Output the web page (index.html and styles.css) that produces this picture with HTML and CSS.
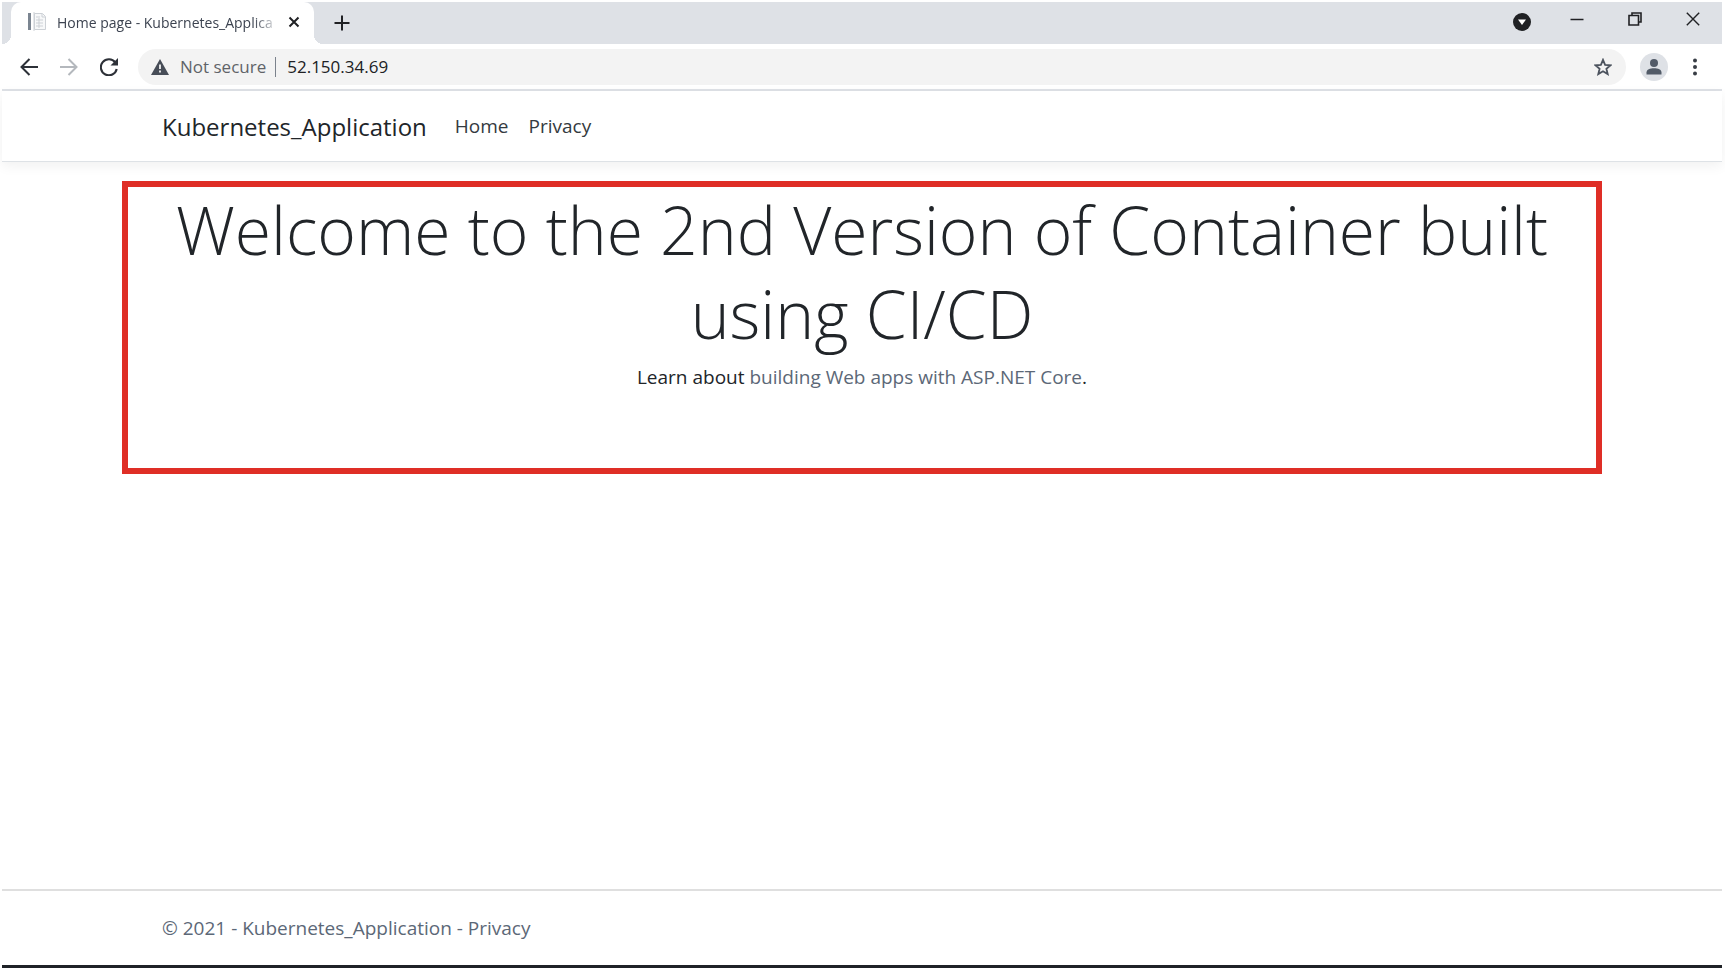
FILE: index.html
```html
<!DOCTYPE html>
<html lang="en">
<head>
<meta charset="utf-8">
<title>Home page - Kubernetes_Application</title>
<link rel="stylesheet" href="styles.css">
</head>
<body>
<div class="window">
  <div class="tab-strip">
    <div class="tab">
      <svg class="favicon" width="20" height="20" viewBox="0 0 20 20" aria-hidden="true">
        <path d="M1 1h3v17H1z" fill="#7b8591"/>
        <path d="M7.500 1.500h8l3 3v13h-11z" fill="#f7f8f9" stroke="#cdd1d6"/>
        <path d="M7 0v19M15 2v3h3M9 5h4M9 8h7M9 11h7M9 14h7M12 6v10" fill="none" stroke="#cdd1d6"/>
      </svg>
      <span class="tab-title">Home page - Kubernetes_Applica</span>
      <button class="icon-button tab-close" aria-label="Close tab">
        <svg width="12" height="12" viewBox="0 0 12 12"><path d="M1.500 1.500l9 9m0-9l-9 9" stroke="#202124" stroke-width="2" fill="none"/></svg>
      </button>
    </div>
    <button class="icon-button new-tab" aria-label="New tab">
      <svg width="16" height="16" viewBox="0 0 16 16"><path d="M8 .5v15M.5 8h15" stroke="#202124" stroke-width="2" fill="none"/></svg>
    </button>
    <div class="window-controls">
      <button class="icon-button tab-search" aria-label="Search tabs">
        <svg width="18" height="18" viewBox="0 0 18 18"><circle cx="9" cy="9" r="9" fill="#202124"/><path d="M5 6.500h8L9 12z" fill="#fff"/></svg>
      </button>
      <div class="window-buttons">
        <button class="icon-button" aria-label="Minimize">
          <svg width="14" height="14" viewBox="0 0 14 14"><path d="M.5 7.500h13" stroke="#202124" stroke-width="1.500"/></svg>
        </button>
        <button class="icon-button" aria-label="Restore">
          <svg width="14" height="14" viewBox="0 0 14 14"><path d="M1 3.500h9.500V13H1zM4 3.500V1h9v9h-2.500" fill="none" stroke="#202124" stroke-width="1.600"/></svg>
        </button>
        <button class="icon-button" aria-label="Close window">
          <svg width="14" height="14" viewBox="0 0 14 14"><path d="M.8.8l12.400 12.400m0-12.400L.8 13.200" stroke="#202124" stroke-width="1.400" fill="none"/></svg>
        </button>
      </div>
    </div>
  </div>

  <div class="toolbar">
    <div class="nav-buttons">
      <button class="icon-button" aria-label="Back">
        <svg width="18" height="18" viewBox="0 0 18 18"><path d="M18 9H1.500M9.500 1L1.500 9l8 8" fill="none" stroke="#2d3138" stroke-width="2"/></svg>
      </button>
      <button class="icon-button" aria-label="Forward">
        <svg width="18" height="18" viewBox="0 0 18 18"><path d="M0 9h16.500M8.500 1l8 8-8 8" fill="none" stroke="#b4b8bd" stroke-width="2"/></svg>
      </button>
      <button class="icon-button" aria-label="Reload">
        <svg width="18" height="18" viewBox="0 0 18 18"><path d="M15.300 4.500A8 8 0 1 0 16.700 11" fill="none" stroke="#2d3138" stroke-width="2.100"/><path d="M18 0v7.500h-7.500z" fill="#2d3138"/></svg>
      </button>
    </div>
    <form class="omnibox">
      <button type="button" class="icon-button security">
        <svg width="18" height="16" viewBox="0 0 18 16" aria-hidden="true"><path d="M9 0l9 16H0z" fill="#474d57"/><path d="M9 5.500v4.500M9 11.500v2" stroke="#f3f3f3" stroke-width="1.800"/></svg>
        <span>Not secure</span>
      </button>
      <input class="address" type="text" value="52.150.34.69" aria-label="Address">
      <button type="button" class="icon-button" aria-label="Bookmark this page">
        <svg width="18" height="18" viewBox="0 0 18 18"><path d="M9 1.800l2.100 5 5.400.500-4.100 3.500 1.300 5.300L9 13.200l-4.700 2.900 1.300-5.300L1.500 7.300l5.400-.500z" fill="none" stroke="#4c535e" stroke-width="1.800"/></svg>
      </button>
    </form>
    <button class="icon-button avatar" aria-label="Profile">
      <svg width="16" height="16" viewBox="0 0 16 16"><circle cx="8" cy="4" r="4" fill="#525b68"/><path d="M.5 15.500v-2C.5 10.500 4 9.300 8 9.300s7.500 1.200 7.500 4.200v2z" fill="#525b68"/></svg>
    </button>
    <button class="icon-button" aria-label="Menu">
      <svg width="4" height="18" viewBox="0 0 4 18"><g fill="#383d45"><circle cx="2" cy="2.500" r="2"/><circle cx="2" cy="9" r="2"/><circle cx="2" cy="15.500" r="2"/></g></svg>
    </button>
  </div>

  <header class="site-header">
    <nav class="container navbar">
      <a class="brand" href="#">Kubernetes_Application</a>
      <a class="nav-link" href="#">Home</a>
      <a class="nav-link" href="#">Privacy</a>
    </nav>
  </header>

  <main class="content">
    <section class="highlight">
      <h1>Welcome to the 2nd Version of Container built using CI/CD</h1>
      <p>Learn about <a href="#">building Web apps with ASP.NET Core</a>.</p>
    </section>
  </main>

  <footer class="site-footer">
    <div class="container">© 2021 - Kubernetes_Application - <a href="#">Privacy</a></div>
  </footer>
</div>
</body>
</html>
```
FILE: styles.css
```css
* { box-sizing: border-box; }

body {
  margin: 0;
  background: #fff;
  color: #212529;
  font-family: "Segoe UI", "Open Sans", "Noto Sans", sans-serif;
  font-size: 19px;
}

a { color: inherit; text-decoration: none; }

.window {
  display: flex;
  flex-direction: column;
  min-height: 100vh;
  padding: 2px 3px 3px 2px;
}

.icon-button {
  display: flex;
  align-items: center;
  justify-content: center;
  padding: 0;
  border: 0;
  background: none;
  color: inherit;
  font: inherit;
}

/* Browser chrome */
.tab-strip {
  display: flex;
  height: 42px;
  padding-left: 9px;
  background: #dee1e6;
}

.tab {
  position: relative;
  display: flex;
  align-items: center;
  width: 303px;
  padding: 0 14px 2px 16px;
  border-radius: 10px 10px 0 0;
  background: #fff;
}

/* Flared feet where the tab meets the toolbar */
.tab::before,
.tab::after {
  content: "";
  position: absolute;
  bottom: 0;
  width: 9px;
  height: 9px;
}

.tab::before {
  right: 100%;
  background: radial-gradient(circle at 0 0, transparent 9px, #fff 9px);
}

.tab::after {
  left: 100%;
  background: radial-gradient(circle at 100% 0, transparent 9px, #fff 9px);
}

.favicon { flex: none; margin-right: 10px; }

.tab-title {
  flex: 1;
  white-space: nowrap;
  color: #3c4350;
  font-size: 14px;
  mask-image: linear-gradient(to right, #000 88%, transparent);
}

.tab-close { margin-left: 8px; }

.new-tab { width: 56px; }

.window-controls {
  display: flex;
  align-items: center;
  gap: 39px;
  margin-left: auto;
  padding: 0 22px 8px 0;
}

.window-buttons { display: flex; gap: 44px; }

.tab-search { padding-top: 6px; }

.toolbar {
  display: flex;
  align-items: center;
  height: 47px;
  padding: 0 25px 0 18px;
  border-bottom: 2px solid #dee1e6;
}

.nav-buttons {
  display: flex;
  gap: 22px;
  margin-right: 20px;
}

.omnibox {
  display: flex;
  flex: 1;
  align-items: center;
  height: 36px;
  margin-right: 14px;
  padding: 0 14px 0 13px;
  border-radius: 18px;
  background: #f3f3f3;
  font-size: 17px;
}

.security {
  gap: 11px;
  padding-right: 9px;
  border-right: 1px solid #7b828c;
  color: #5f6368;
  line-height: 20px;
}

.address {
  flex: 1;
  min-width: 0;
  padding: 0 11px;
  border: 0;
  outline: 0;
  background: none;
  color: #202124;
  font: inherit;
}

.avatar {
  width: 28px;
  height: 28px;
  margin-right: 25px;
  border-radius: 50%;
  background: #dee1e6;
}

/* Page */
.container {
  width: 100%;
  max-width: 1400px;
  margin: 0 auto;
}

.site-header {
  border-bottom: 1px solid #dee2e6;
  box-shadow: 0 4px 12px rgba(0, 0, 0, 0.06);
}

.navbar {
  display: flex;
  align-items: center;
  height: 70px;
}

.brand { margin-right: 28px; font-size: 24px; }

.nav-link { margin-right: 20px; color: #343a40; }

.content {
  flex: 1;
  padding-top: 19px;
}

.highlight {
  width: 86%;
  min-height: 293px;
  margin: 0 auto;
  padding: 0 32px;
  border: 6px solid #df2e26;
  text-align: center;
}

.highlight h1 {
  margin: 0 0 6px;
  font-size: 66px;
  font-weight: 300;
  line-height: 84px;
}

.highlight p { margin: 0; line-height: 32px; }

.highlight a { color: #5c6877; }

.site-footer {
  padding: 23px 0;
  border-top: 2px solid #dfdfdf;
  border-bottom: 3px solid #1f2227;
  color: #5c6877;
  line-height: 28px;
}
```
